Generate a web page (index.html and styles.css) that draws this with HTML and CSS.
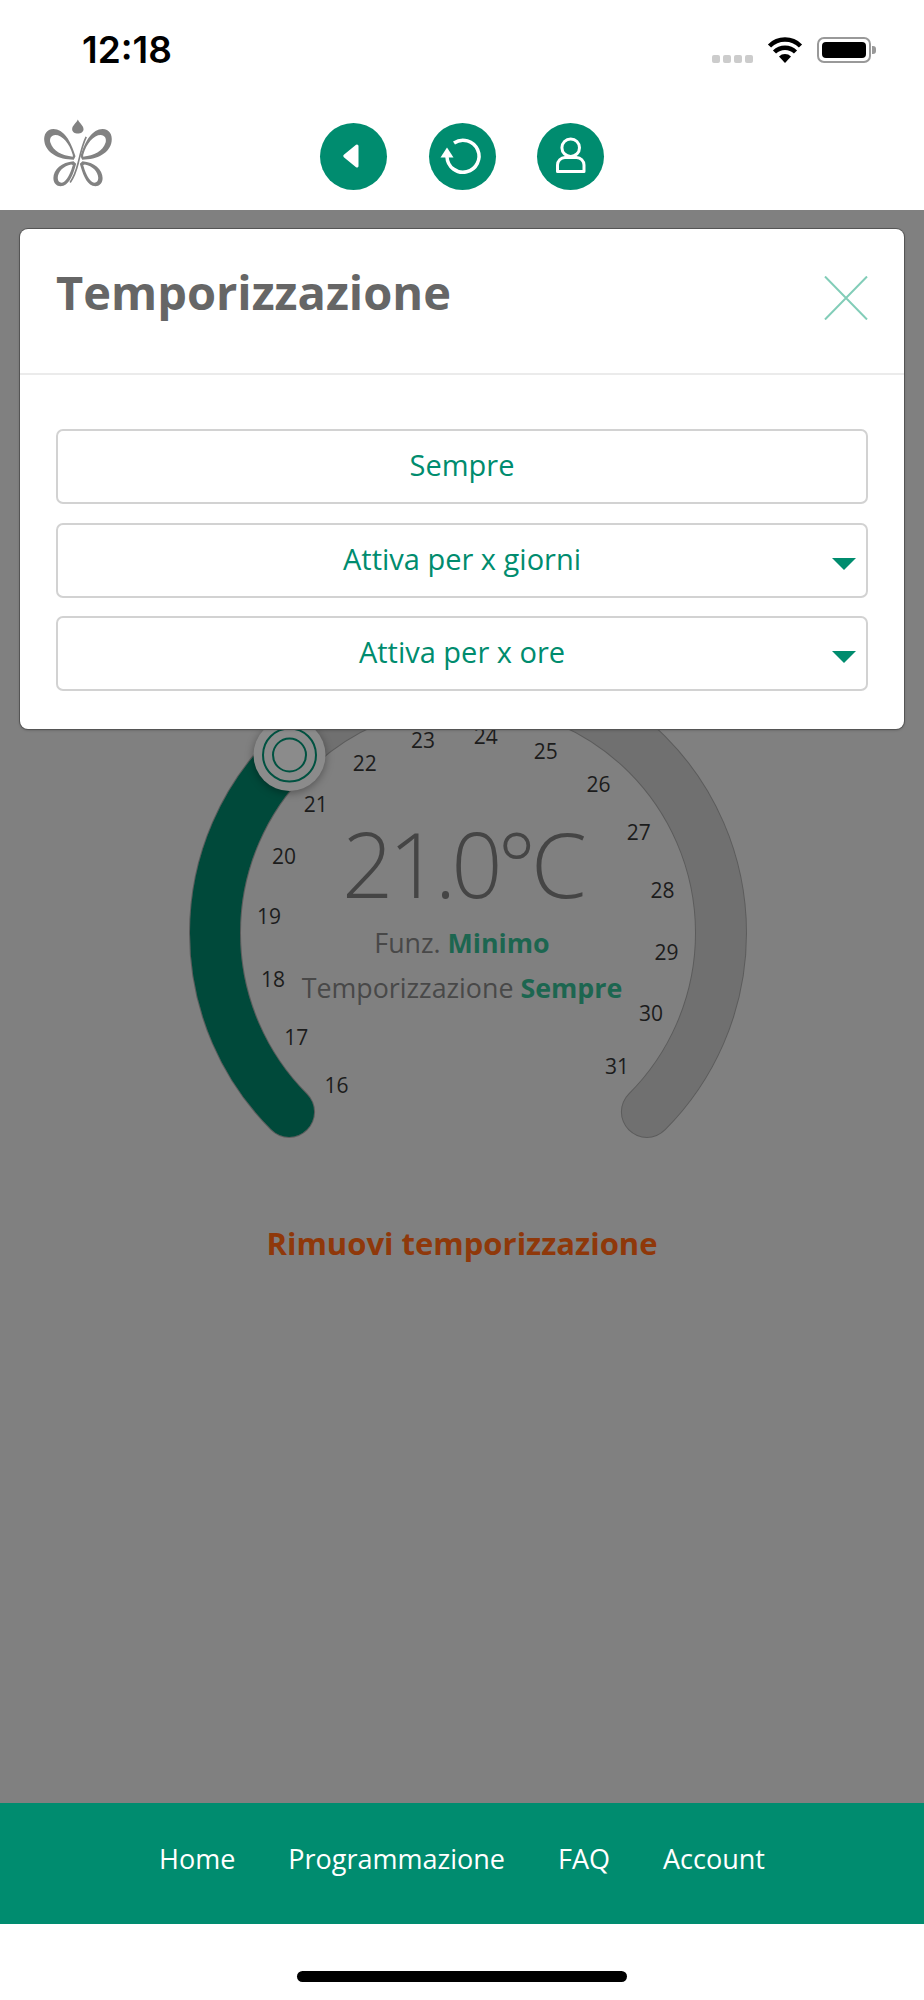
FILE: index.html
```html
<!DOCTYPE html>
<html lang="it">
<head>
    <meta charset="UTF-8">
    <meta name="viewport" content="width=device-width, initial-scale=1.0">
    <title>Temporizzazione</title>
    <link rel="stylesheet" href="styles.css">
</head>
<body>
    <!-- Status bar -->
    <div class="status-bar">
        <span class="clock">12:18</span>
        <div class="status-icons">
            <div class="signal"><i></i><i></i><i></i><i></i></div>
            <svg class="wifi" width="36" height="26" viewBox="0 0 36 26">
                <path d="M18 26l-6-6.500a8.500 8.500 0 0 1 12 0z" fill="#000"/>
                <path d="M7.500 15a15 15 0 0 1 21 0M2.500 9a22 22 0 0 1 31 0" fill="none" stroke="#000" stroke-width="4.500"/>
            </svg>
            <div class="battery"><div class="battery-level"></div></div>
        </div>
    </div>

    <!-- Top navigation -->
    <header class="topbar">
        <svg class="logo" width="77" height="74" viewBox="60 50 230 220">
            <path d="M173 60c-4 10-17 18-17 29 0 8 8 13 17 13s17-5 17-13c0-11-13-19-17-29z"/>
            <g id="wings" fill-rule="evenodd">
                <path d="M166 170C152 122 130 88 100 88 80 88 70 105 73 125c5 35 42 55 88 55zM158 166C148 130 126 106 106 106 93 106 88 117 91 129c8 26 35 40 67 42z"/>
                <path d="M160 185c-35 3-60 25-60 50 0 20 15 28 30 23 20-8 30-38 38-66zM153 194c-22 4-40 21-40 41 0 13 10 17 19 11 13-10 21-32 26-50z"/>
            </g>
            <use href="#wings" transform="translate(347) scale(-1 1)"/>
            <path d="M198 112c-12 25-16 45-24 78-6 24-14 44-24 58" fill="none" stroke="#828282" stroke-width="5"/>
        </svg>
        <div class="topbar-actions">
            <a class="round-btn">
                <svg width="67" height="67" viewBox="0 0 67 67">
                    <path d="M37 23L24.800 33 37 43z" fill="#fff" stroke="#fff" stroke-width="3" stroke-linejoin="round"/>
                </svg>
            </a>
            <a class="round-btn">
                <svg width="67" height="67" viewBox="0 0 67 67">
                    <path d="M25 20a16 16 0 1 1-7 14" fill="none" stroke="#fff" stroke-width="3.500"/>
                    <path d="M11.500 34.500L18 24.500l6.500 10z" fill="#fff"/>
                </svg>
            </a>
            <a class="round-btn">
                <svg width="67" height="67" viewBox="0 0 67 67" fill="none" stroke="#fff" stroke-width="3">
                    <circle cx="33.700" cy="24.700" r="8.800"/>
                    <path d="M20.500 48.500v-6.500a7.500 7.500 0 0 1 7.500-7.500h11.500a7.500 7.500 0 0 1 7.500 7.500v6.500z" stroke-linejoin="round"/>
                </svg>
            </a>
        </div>
    </header>

    <!-- Thermostat, dimmed behind the dialog -->
    <main class="content">
        <svg class="dial" width="924" height="490" viewBox="0 660 924 490">
            <path class="track-edge" d="M289.100 1111.900A253 253 0 1 1 646.900 1111.900"/>
            <path class="track" d="M289.100 1111.900A253 253 0 1 1 646.900 1111.900"/>
            <path class="track-on" d="M289.100 1111.900A253 253 0 0 1 289.100 754.100"/>

            <circle class="knob" cx="289.500" cy="755" r="36"/>
            <circle class="knob-ring" cx="289.500" cy="755" r="26.500"/>
            <circle class="knob-ring" cx="289.500" cy="755" r="16.500"/>

            <text class="tick" x="336.500" y="1093">16</text>
            <text class="tick" x="296.300" y="1045">17</text>
            <text class="tick" x="273" y="987">18</text>
            <text class="tick" x="269" y="924">19</text>
            <text class="tick" x="284" y="864">20</text>
            <text class="tick" x="315.800" y="812">21</text>
            <text class="tick" x="364.800" y="771">22</text>
            <text class="tick" x="423" y="748">23</text>
            <text class="tick" x="485.700" y="744">24</text>
            <text class="tick" x="545.800" y="759">25</text>
            <text class="tick" x="598.600" y="792">26</text>
            <text class="tick" x="638.800" y="840">27</text>
            <text class="tick" x="662.500" y="898">28</text>
            <text class="tick" x="666.400" y="960">29</text>
            <text class="tick" x="651" y="1021">30</text>
            <text class="tick" x="617" y="1074">31</text>

            <text class="temp" x="462" y="898">21.0°C</text>
            <text class="mode" x="462" y="953">Funz. <tspan class="mode-value">Minimo</tspan></text>
            <text class="mode" x="462" y="998">Temporizzazione <tspan class="mode-value">Sempre</tspan></text>
        </svg>

        <a class="remove-link">Rimuovi temporizzazione</a>

        <!-- Dialog -->
        <section class="modal">
            <div class="modal-header">
                <h2 class="modal-title">Temporizzazione</h2>
                <svg class="modal-close" width="44" height="44" viewBox="0 0 44 44">
                    <path d="M1 0.500L43 43.500M43 0.500L1 43.500" stroke="#82cdb8" stroke-width="2" fill="none"/>
                </svg>
            </div>
            <div class="modal-body">
                <button class="option">Sempre</button>
                <button class="option option-select">Attiva per x giorni</button>
                <button class="option option-select">Attiva per x ore</button>
            </div>
        </section>
    </main>

    <!-- Footer links -->
    <footer class="footer">
        <a>Home</a>
        <a>Programmazione</a>
        <a>FAQ</a>
        <a>Account</a>
    </footer>

    <div class="home-area"><div class="home-indicator"></div></div>
</body>
</html>
```

FILE: styles.css
```css
/* General */
* {
    box-sizing: border-box;
    margin: 0;
    padding: 0;
}

body {
    background-color: #ffffff;
    font-family: "Open Sans", sans-serif;
    display: flex;
    flex-direction: column;
    width: 924px;
    height: 2000px;
    overflow: hidden;
}

/* Status bar */
.status-bar {
    height: 100px;
    display: flex;
    justify-content: space-between;
    padding: 27px 53px 0 82px;
}

.clock {
    font-family: Inter, sans-serif;
    font-size: 37px;
    font-weight: 600;
    line-height: 46px;
    color: #000000;
}

.status-icons {
    display: flex;
    align-items: flex-start;
    padding-top: 10px;
}

.signal {
    display: flex;
    gap: 3px;
    margin: 18px 14px 0 0;
}

.signal i {
    width: 8px;
    height: 8px;
    border-radius: 2px;
    background-color: #cccccc;
}

.battery {
    position: relative;
    width: 54px;
    height: 26px;
    margin-left: 14px;
    padding: 3px;
    border: 2px solid #999999;
    border-radius: 7px;
}

.battery::after {
    content: "";
    position: absolute;
    top: 7px;
    right: -7px;
    width: 4px;
    height: 8px;
    border-radius: 0 3px 3px 0;
    background-color: #999999;
}

.battery-level {
    height: 100%;
    background-color: #000000;
    border-radius: 4px;
}

/* Top navigation */
.topbar {
    height: 110px;
    position: relative;
    display: flex;
    justify-content: center;
    padding-top: 23px;
}

.logo {
    position: absolute;
    left: 40px;
    top: 16px;
    fill: #828282;
}

.topbar-actions {
    display: flex;
    gap: 41.500px;
}

.round-btn {
    width: 67px;
    height: 67px;
    border-radius: 50%;
    background-color: #008c6f;
}

.round-btn svg {
    display: block;
}

/* Thermostat */
.content {
    flex: 1;
    position: relative;
    background-color: #808080;
    padding-top: 450px;
    display: flex;
    flex-direction: column;
    align-items: center;
}

.dial {
    display: block;
    flex-shrink: 0;
}

.track-edge,
.track,
.track-on {
    fill: none;
    stroke-linecap: round;
}

.track-edge {
    stroke: #5c5c5c;
    stroke-width: 52;
}

.track {
    stroke: #707070;
    stroke-width: 50;
}

.track-on {
    stroke: #00493a;
    stroke-width: 50;
}

.knob {
    fill: #8b8b8b;
    filter: drop-shadow(0 2px 4px rgba(0, 0, 0, 0.35));
}

.knob-ring {
    fill: none;
    stroke: #005241;
    stroke-width: 2;
}

.tick {
    font-size: 21px;
    fill: #1c1c1c;
    text-anchor: middle;
}

.temp {
    font-size: 90px;
    font-weight: 300;
    letter-spacing: -5px;
    fill: #454545;
    text-anchor: middle;
}

.mode {
    font-size: 26.800px;
    fill: #484848;
    text-anchor: middle;
}

.mode-value {
    font-weight: 700;
    fill: #1c6650;
}

.remove-link {
    margin-top: 73px;
    font-size: 31px;
    font-weight: 700;
    line-height: 40px;
    color: #8f380a;
}

/* Dialog */
.modal {
    position: absolute;
    top: 19px;
    left: 20px;
    right: 20px;
    background-color: #ffffff;
    border-radius: 8px;
    box-shadow: 0 0 0 1px #555555, 0 1px 3px rgba(0, 0, 0, 0.3);
}

.modal-header {
    height: 146px;
    padding: 32px 36px 0;
    display: flex;
    justify-content: space-between;
    border-bottom: 2px solid #ebebeb;
}

.modal-title {
    font-size: 47px;
    font-weight: 700;
    line-height: 62px;
    color: #666666;
}

.modal-close {
    margin-top: 15px;
}

.modal-body {
    padding: 54px 36px 38px;
    display: flex;
    flex-direction: column;
    gap: 18.500px;
}

.option {
    position: relative;
    height: 75px;
    padding-bottom: 4px;
    background-color: #ffffff;
    border: 2px solid #d2d2d2;
    border-radius: 7px;
    font-family: "Open Sans", sans-serif;
    font-size: 29px;
    color: #008c6e;
}

.option-select::after {
    content: "";
    position: absolute;
    top: 33px;
    right: 10px;
    border-style: solid;
    border-width: 12px 12px 0;
    border-color: #008c6e transparent transparent;
}

/* Footer */
.footer {
    height: 121px;
    background-color: #008c6f;
    display: flex;
    justify-content: center;
    gap: 53px;
    padding-top: 37px;
    font-size: 27px;
    line-height: 38px;
    color: #ffffff;
}

.home-area {
    height: 76px;
    padding-top: 47px;
}

.home-indicator {
    width: 330px;
    height: 11px;
    margin: 0 auto;
    border-radius: 6px;
    background-color: #000000;
}
```
